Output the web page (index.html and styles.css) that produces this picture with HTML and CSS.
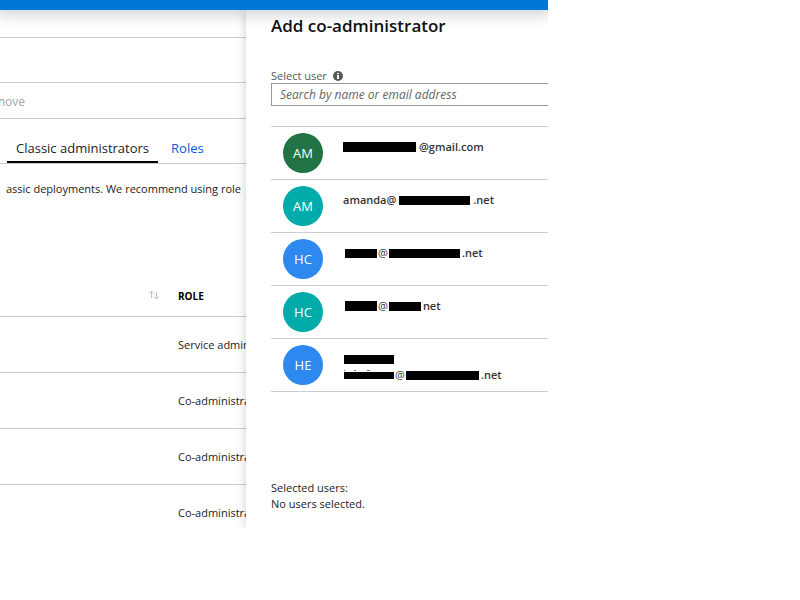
FILE: index.html
```html
<!DOCTYPE html>
<html lang="en">
<head>
  <meta charset="UTF-8">
  <meta name="viewport" content="width=device-width, initial-scale=1.0">
  <title>Add co-administrator</title>
  <link rel="stylesheet" href="styles.css">
</head>
<body>
  <div class="portal">
    <header class="topbar"></header>
    <div class="blades">
      <main class="access">
        <div class="crumbs"></div>
        <div class="heading"></div>
        <div class="toolbar"><button class="remove" disabled>move</button></div>
        <nav class="tabs">
          <a class="tab active" href="#classic">Classic administrators</a>
          <a class="tab" href="#roles">Roles</a>
        </nav>
        <p class="notice">assic deployments. We recommend using role</p>
        <table class="admins">
          <thead>
            <tr>
              <th class="sortCell">
                <svg class="sort" width="12" height="10" viewBox="0 0 12 10" fill="none" stroke="#c4c4c4">
                  <path d="M3.5 8V1M1 3.5L3.5 1L6 3.5M8.5 2v7M6 6.5L8.5 9L11 6.5"/>
                </svg>
              </th>
              <th>ROLE</th>
            </tr>
          </thead>
          <tbody>
            <tr><td></td><td>Service administrator</td></tr>
            <tr><td></td><td>Co-administrator</td></tr>
            <tr><td></td><td>Co-administrator</td></tr>
            <tr><td></td><td>Co-administrator</td></tr>
          </tbody>
        </table>
      </main>

      <section class="panel">
        <h2>Add co-administrator</h2>
        <div class="labelRow">
          <label for="user">Select user</label>
          <svg width="10" height="10" viewBox="0 0 10 10">
            <circle cx="5" cy="5" r="5" fill="#595959"/>
            <path d="M4 2h2v1H4zM4 4h2v4H4z" fill="#fff"/>
          </svg>
        </div>
        <input type="text" id="user" placeholder="Search by name or email address">
        <ul class="users">
          <li>
            <span class="avatar green">AM</span>
            <div class="email"><span class="bar wide tall"></span><span>@gmail.com</span></div>
          </li>
          <li>
            <span class="avatar teal">AM</span>
            <div class="email"><span>amanda@</span><span class="bar long"></span><span>.net</span></div>
          </li>
          <li>
            <span class="avatar blue">HC</span>
            <div class="email tight"><span class="bar short"></span><span class="at">@</span><span class="bar long"></span><span>.net</span></div>
          </li>
          <li>
            <span class="avatar teal">HC</span>
            <div class="email tight"><span class="bar short tall"></span><span class="at">@</span><span class="bar short"></span><span>net</span></div>
          </li>
          <li>
            <span class="avatar blue">HE</span>
            <div class="names">
              <span class="bar medium"></span>
              <svg class="traces" width="50" height="2" viewBox="0 0 50 2" fill="#777">
                <path d="M0 0h1v1H0zM10 0h2v1h-2zM23 0h3v1h-3z"/>
              </svg>
              <div class="email tight"><span class="bar medium thin"></span><span class="at">@</span><span class="bar wide"></span><span>.net</span></div>
            </div>
          </li>
        </ul>
        <div class="selected">
          <p>Selected users:</p>
          <p>No users selected.</p>
        </div>
      </section>
    </div>
  </div>
</body>
</html>
```

FILE: styles.css
```css
* {
  margin: 0;
  padding: 0;
  box-sizing: border-box;
  font-family: "Segoe UI", "Open Sans", "Noto Sans", sans-serif;
}
body {
  background: #fff;
  color: #222;
  font-size: 12px;
  line-height: 16px;
}
.portal {
  width: 68.5%;
  overflow: hidden;
}
.topbar {
  position: relative;
  z-index: 2;
  height: 10px;
  background: #0078d7;
  box-shadow: 0 0 16px 4px rgba(0,0,0,0.2);
}
.blades {
  display: flex;
}
.access {
  flex: 1;
  min-width: 0;
  overflow: hidden;
}
.crumbs {
  height: 28px;
  border-bottom: 1px solid #ccc;
}
.heading {
  height: 45px;
  border-bottom: 1px solid #ccc;
}
.toolbar {
  height: 36px;
  border-bottom: 1px solid #ccc;
}
.remove {
  display: flex;
  justify-content: flex-end;
  align-items: center;
  width: 25px;
  height: 36px;
  border: none;
  background: none;
  color: #a6a6a6;
  font-size: 12px;
}
.tabs {
  display: flex;
  gap: 4px;
  height: 45px;
  padding: 14px 0 0 7px;
  border-bottom: 1px solid #ccc;
}
.tab {
  height: 30px;
  padding: 5px 9px;
  color: #015cda;
  font-size: 13px;
  line-height: 20px;
  text-decoration: none;
  white-space: nowrap;
}
.tab.active {
  color: #222;
  border-bottom: 2px solid #000;
}
.notice {
  display: flex;
  justify-content: flex-end;
  padding: 17px 5px 0 0;
  white-space: nowrap;
  font-size: 11px;
}
.admins {
  width: 100%;
  margin-top: 74px;
  table-layout: fixed;
  border-collapse: separate;
  border-spacing: 0;
}
.admins th {
  height: 46px;
  padding: 4px 0 0;
  border-bottom: 1px solid #ccc;
  color: #000;
  font-size: 10px;
  text-align: left;
}
.admins .sortCell {
  width: 178px;
  padding: 4px 18px 0 0;
  text-align: right;
}
.sort {
  display: inline-block;
}
.admins td {
  height: 56px;
  border-bottom: 1px solid #ccc;
  white-space: nowrap;
  font-size: 11px;
}
.admins tr:last-child td {
  height: 43px;
  padding-top: 12px;
  border-bottom: none;
}
.panel {
  position: relative;
  flex: 0 0 302px;
  padding: 4px 0 16px 25px;
  background: #fff;
  box-shadow: 0 0 10px rgba(0,0,0,0.2);
}
h2 {
  color: #111;
  font-size: 17px;
  font-weight: 600;
  line-height: 24px;
}
.labelRow {
  display: flex;
  align-items: center;
  gap: 6px;
  margin-top: 30px;
  height: 15px;
  color: #595959;
}
.labelRow label {
  font-size: 11px;
}
input[type="text"] {
  display: block;
  width: 100%;
  height: 23px;
  padding: 0 8px;
  border: 1px solid #999;
  border-right: none;
  font-size: 12px;
}
input::placeholder {
  color: #666;
  font-style: italic;
}
.users {
  margin-top: 20px;
  border-top: 1px solid #ccc;
  list-style: none;
}
.users li {
  display: flex;
  align-items: flex-start;
  gap: 20px;
  height: 53px;
  padding: 6px 12px;
  border-bottom: 1px solid #ccc;
}
.avatar {
  flex: none;
  width: 40px;
  height: 40px;
  border-radius: 50%;
  color: #fff;
  font-size: 13px;
  line-height: 40px;
  text-align: center;
}
.green {
  background: #217346;
}
.teal {
  background: #00aba9;
}
.blue {
  background: #2d89ef;
}
.email {
  display: flex;
  align-items: center;
  gap: 3px;
  margin-top: 6px;
  color: #333;
  font-size: 11px;
  font-weight: 600;
}
.email.tight {
  gap: 1px;
  padding-left: 2px;
}
.email.tight span:last-child {
  margin-left: 1px;
}
.at {
  font-weight: 400;
}
.bar {
  flex: none;
  height: 9px;
  background: #000;
}
.bar.wide {
  width: 73px;
}
.bar.long {
  width: 71px;
}
.bar.medium {
  width: 50px;
}
.bar.short {
  width: 32px;
}
.bar.tall {
  height: 10px;
}
.bar.thin {
  height: 7px;
}
.names {
  display: flex;
  flex-direction: column;
  padding: 10px 0 0 1px;
}
.traces {
  margin-top: 6px;
}
.names .email {
  margin-top: -5px;
  padding-left: 0;
}
.selected {
  margin-top: 88px;
}
.selected p {
  font-size: 11px;
}
```
